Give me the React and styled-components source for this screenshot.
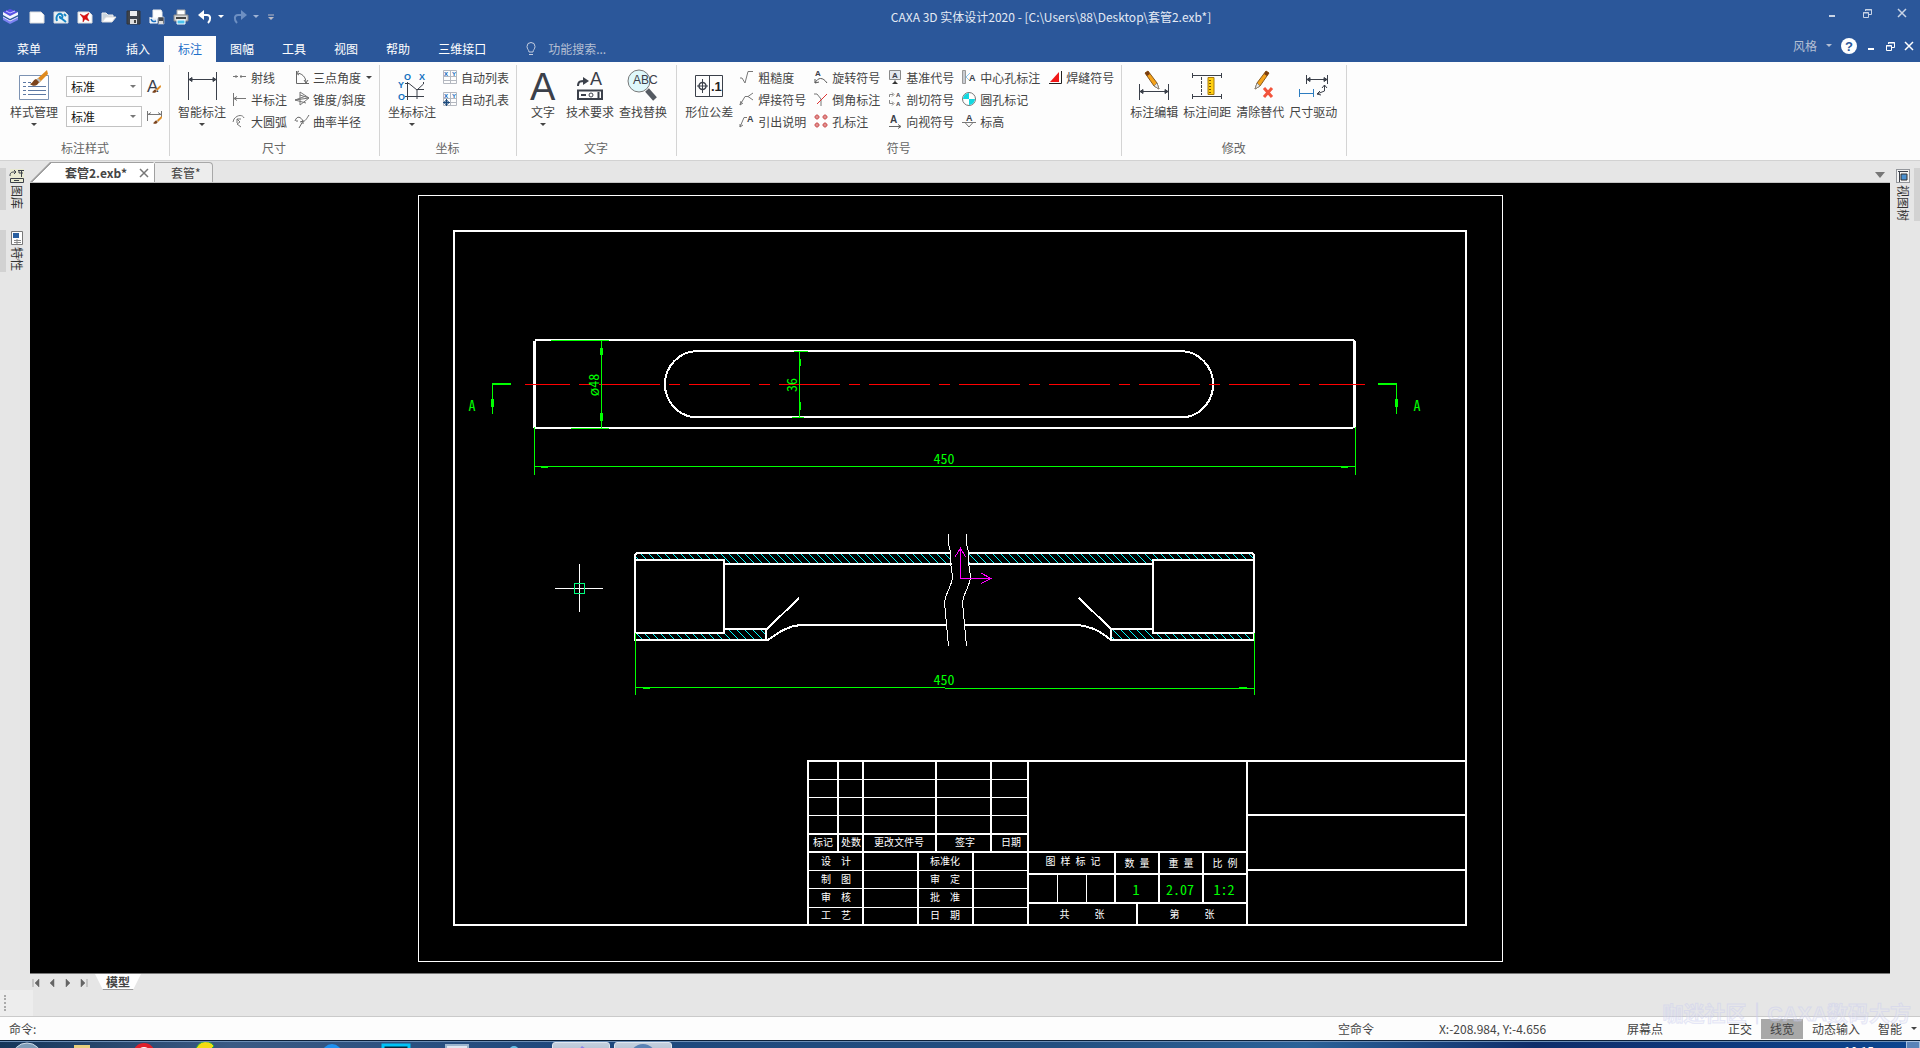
import React from "react";
import styled, { createGlobalStyle } from "styled-components";

const GlobalStyle = createGlobalStyle`
    * {
        box-sizing: border-box;
    }
    body {
        margin: 0;
        font-family: "Noto Sans CJK SC", sans-serif;
        font-size: 12px;
        color: #444;
        background: #e6e6e6;
    }
    button, input, select {
        font: inherit;
        color: inherit;
        border: 0;
        padding: 0;
        margin: 0;
        background: none;
    }
`;

/* ---------- icons ---------- */

const IconSvg = styled.svg`
    flex: none;
    overflow: visible;
`;

const Icon = ({ size = 16, children }) => (
  <IconSvg width={size} height={size} viewBox={`0 0 ${size} ${size}`} fill="none" stroke="#3b404a" aria-hidden="true">
    {children}
  </IconSvg>
);

const Letter = ({ x, y, size = 9, weight = 700, fill = "#3b404a", children }) => (
  <text x={x} y={y} fontSize={size} fontWeight={weight} fontFamily="Liberation Sans, sans-serif" fill={fill} stroke="none">
    {children}
  </text>
);

const Pencil = ({ flip }) => (
  <g transform={flip ? "translate(32 0) scale(-1 1)" : undefined}>
    <path d="M7 4 L10 2 L19 14 L21 20 L16 17 Z" fill="#f5a31a" stroke="#8a5a1c" />
    <path d="M7 4 L10 2 L12 5 L9 7 Z" fill="#7a3d10" stroke="none" />
    <path d="M16 17 L19 14 L21 20 Z" fill="#e8e8e8" stroke="#777" strokeWidth="0.700" />
  </g>
);

const Brush = ({ x = 0, y = 0, s = 1 }) => (
  <g transform={`translate(${x} ${y}) scale(${s})`} stroke="none">
    <path d="M17 0 L18 4 L9 13 L6 10 Z" fill="#e08a1e" />
    <path d="M8 8 L11 11 L9 13 L6 10 Z" fill="#bbb" />
    <path d="M6 9 C3 10 3 13 0 14 C3 17 8 16 9 12 Z" fill="#7b431c" />
  </g>
);

const icons = {
  page: <path d="M1 3 H12 L15 6 V14 H1 Z" fill="#fff" stroke="#ddd" />,
  template: (
    <>
      <path d="M1 3 H12 L15 6 V14 H1 Z" fill="#e9f3f8" stroke="#ddd" />
      <path d="M4 12 C2 6 7 3 9 6 C11 9 6 11 7 7 M8 9 L13 13 M11 5 L13 7" stroke="#1583c4" strokeWidth="2" />
    </>
  ),
  sheetRed: (
    <>
      <path d="M1 3 H12 L15 6 V14 H1 Z" fill="#fff" stroke="#ddd" />
      <path d="M3 5 L7 7 L12 4 L10 8 L12 12 L8 10 L6 13 L6 9 Z" fill="#e01010" stroke="#b00" strokeWidth="0.500" />
    </>
  ),
  folder: (
    <>
      <path d="M1 13 V4 H5 L7 6 H12 V8" fill="#c9d4de" stroke="#eee" />
      <path d="M1 13 L5 8 H15 L11 13 Z" fill="#fff" stroke="#ddd" />
    </>
  ),
  save: (
    <>
      <path d="M2 2 H15 V15 H2 Z" fill="#3f444c" stroke="#30343a" />
      <path d="M5 2 H12 V7 H5 Z" fill="#eee" stroke="none" />
      <path d="M5 10 H12 V15 H5 Z" fill="#ddd" stroke="none" />
      <path d="M9 11 H11 V14 H9 Z" fill="#444" stroke="none" />
    </>
  ),
  saveAs: (
    <>
      <path d="M4 1 H12 L13 3 V9 H4 Z" fill="#fff" stroke="#eee" />
      <path d="M1 8 V14 H8 V9 H1" fill="#dfe9f4" stroke="#fff" />
      <path d="M2 10 C3 13 5 13 7 12" stroke="#1c6fc0" strokeWidth="1.500" />
      <path d="M9 8 H15 V15 H9 Z" fill="#444a54" stroke="#fff" strokeWidth="0.500" />
      <path d="M10 12 H14 V15 H10 Z" fill="#ddd" stroke="none" />
    </>
  ),
  print: (
    <>
      <path d="M4 1 H12 V6 H4 Z" fill="#fff" stroke="#aaa" />
      <path d="M1 6 H15 V12 H1 Z" fill="#d8d8d8" stroke="#888" />
      <path d="M3 8 H13 V10 H3 Z" fill="#444" stroke="none" />
      <path d="M4 11 H12 V15 H4 Z" fill="#4cc3ef" stroke="#fff" />
    </>
  ),
  undo: (
    <>
      <path d="M7 1 V11 L1 6 Z" fill="#fff" stroke="none" />
      <path d="M5 6 H10 C14 6 14 11 11 14" stroke="#fff" strokeWidth="2" />
    </>
  ),
  redo: (
    <>
      <path d="M9 1 V11 L15 6 Z" fill="#6d8fc2" stroke="none" />
      <path d="M11 6 H6 C2 6 2 11 5 14" stroke="#6d8fc2" strokeWidth="2" />
    </>
  ),
  ray: <path d="M1 7.500 H6 M8 7.500 H14 M4 6 V9 M9 6 V9" stroke="#777" />,
  halfDim: <path d="M1.500 2 V15 M2 7.500 H14 M2 7.500 L5 5.500 M2 7.500 L5 9.500" stroke="#777" />,
  bigArc: <path d="M2 6 C6 1 11 2 12 5 M2 6 L1 9 M5 6 L8 9 L5 11 L9 14 M5 6 L9 6 M5 6 V10" stroke="#777" />,
  angle: <path d="M2.500 2 V14.500 H15 M2 4 C8 4 12 8 12 14 M2 4 L5 2 M2 4 L5 6 M12 14 L10 11 M12 14 L14 11" stroke="#666" />,
  taper: <path d="M6 1 L15 7 L6 14 M6 1 V14 M6 4 L15 7 L1 9 M1 9 L12 12 M1 9 L12 5" stroke="#777" />,
  curvature: <path d="M1 8 C3 2 7 4 9 8 C11 9 13 5 15 2 M9 8 L5 15 M9 8 L6 9 M9 8 L9 11 M2 8 L4 8" stroke="#666" />,
  table: (
    <>
      <path d="M1.500 1.500 H14.500 V14.500 H1.500 Z M1.500 7.500 H14.500 M1.500 11.500 H14.500 M8.500 1.500 V14.500" stroke="#b4b8c0" />
      <Letter x={2} y={7} size={6} fill="#0a62b8">X</Letter>
      <Letter x={10} y={7} size={6} fill="#0a62b8">Y</Letter>
    </>
  ),
  holeTable: (
    <>
      <path d="M1.500 1.500 H14.500 V14.500 H1.500 Z M1.500 7.500 H14.500 M1.500 11.500 H14.500 M8.500 1.500 V14.500" stroke="#b4b8c0" />
      <Letter x={2} y={7} size={6} fill="#0a62b8">X</Letter>
      <Letter x={10} y={7} size={6} fill="#0a62b8">Y</Letter>
      <circle cx="4.500" cy="11.500" r="2" stroke="#1c4a7c" />
      <path d="M4.500 8 V15 M1 11.500 H8" stroke="#1c4a7c" />
    </>
  ),
  rough: <path d="M1 9 L3 9 L6 14 L9 2.500 H14" stroke="#777" />,
  weld: <path d="M1 14 L6 5.500 H9 M14 2 L9 5.500 L14 9 M1 14 L2 10 M1 14 L4 12" stroke="#777" />,
  leader: (
    <>
      <path d="M1 14 L5 4.500 H8 M1 14 L1 11 M1 14 L4 12" stroke="#777" />
      <Letter x={8} y={9} size={9}>A</Letter>
    </>
  ),
  rotate: (
    <>
      <Letter x={2} y={7} size={8}>A</Letter>
      <path d="M2 14 C5 8 10 8 14 14 M2 14 L2 10 M2 14 L6 13" stroke="#555" />
    </>
  ),
  chamfer: (
    <>
      <path d="M1 3 L4 3 L8 8 V15" stroke="#777" />
      <path d="M4 13 L14 3" stroke="#d33" />
    </>
  ),
  holes: (
    <g stroke="#d46a6a">
      {[[4, 4], [12, 4], [4, 12], [12, 12]].map(([x, y]) => (
        <path key={`${x}-${y}`} d={`M${x - 3} ${y} H${x + 3} M${x} ${y - 3} V${y + 3} M${x - 1.5} ${y - 1.5} H${x + 1.5} V${y + 1.5} H${x - 1.5} Z`} />
      ))}
    </g>
  ),
  datum: (
    <>
      <path d="M2.500 1.500 H13.500 V10.500 H2.500 Z M8 10.500 V14" stroke="#888" fill="#e4e8ee" />
      <path d="M5 15 L8 12 L11 15 Z" fill="#333" stroke="none" />
      <Letter x={5} y={9} size={8}>A</Letter>
    </>
  ),
  section: (
    <>
      <path d="M6 3.500 H2.500 V6 M2.500 9 V12.500 H6 M5 1.500 L7 3.500 L5 5.500 M5 10.500 L7 12.500 L5 14.500" stroke="#888" />
      <Letter x={9} y={6} size={6}>A</Letter>
      <Letter x={9} y={15} size={6}>A</Letter>
    </>
  ),
  viewDir: (
    <>
      <Letter x={3} y={10} size={10}>A</Letter>
      <path d="M2 13.500 H14 M11 11.500 L14 13.500 L11 15.500" stroke="#666" />
    </>
  ),
  centerHole: (
    <>
      <path d="M1.500 1.500 H4.500 V14.500 H1.500 Z" fill="#c8ccd2" stroke="#999" />
      <path d="M9 4 L5 8 L9 12" stroke="#8cc6ee" />
      <Letter x={8} y={12} size={9}>A</Letter>
    </>
  ),
  roundHole: (
    <>
      <circle cx="8" cy="8" r="6.500" fill="#fff" stroke="#777" />
      <path d="M8 8 V2 A6 6 0 0 0 2 8 Z M8 8 V14 A6 6 0 0 0 14 8 Z" fill="#13d8e0" stroke="none" />
    </>
  ),
  level: (
    <>
      <Letter x={5} y={8} size={9}>A</Letter>
      <path d="M1 9.500 H15 M4 9.500 L8 14 L12 9.500" stroke="#777" />
    </>
  ),
  seam: (
    <>
      <path d="M3 13 L12 3 V13 Z" fill="#f01818" stroke="none" />
      <path d="M2 14.500 H14.500 V2" stroke="#222" />
    </>
  ),
  fontBrush: (
    <>
      <Letter x={1} y={13} size={17} weight={400}>A</Letter>
      <Brush x={6} y={6} s={0.5} />
    </>
  ),
  dimBrush: (
    <>
      <path d="M1.500 2 V12 M15.500 2 V8 M2 5.500 H15 M2 5.500 L5 3.500 M15 5.500 L12 3.500" stroke="#777" />
      <Brush x={7} y={7} s={0.5} />
    </>
  ),
  styleMgr: (
    <>
      <path d="M1.500 6.500 H30.500 V30.500 H1.500 Z" fill="#fff" stroke="#7d93b3" />
      <path d="M5 13.500 H8 M5 17.500 H8 M5 21.500 H8 M5 25.500 H8 M10 13.500 H13 M10 17.500 H28 M10 21.500 H28 M10 25.500 H28" stroke="#5c78a3" />
      <Brush x={12} y={1} s={1} />
    </>
  ),
  smartDim: <path d="M2.500 3 V31 M30.500 3 V31 M3 10.500 H30 M3 10.500 L6 8.500 V12.500 Z M30 10.500 L27 8.500 V12.500 Z" fill="#3b404a" />,
  coord: (
    <>
      <Letter x={8} y={11} size={9} fill="#1170c0">O</Letter>
      <Letter x={23} y={11} size={9} fill="#1170c0">X</Letter>
      <Letter x={2} y={19} size={9} fill="#1170c0">Y</Letter>
      <Letter x={2} y={31} size={9} fill="#1170c0">O</Letter>
      <path d="M11.500 13 V31 M9 27.500 H28 M9 14.500 H13 L21 21 V30 M27.500 13 V15 L21 21 M21 20.500 H28" />
    </>
  ),
  bigA: <Letter x={3} y={31} size={38} weight={400}>A</Letter>,
  techReq: (
    <>
      <Letter x={16} y={16} size={18} weight={400}>A</Letter>
      <path d="M4 17 C4 12 7 12 10 12" strokeWidth="2" />
      <path d="M9 8 L15 12 L9 16 Z" fill="#3b404a" stroke="none" />
      <path d="M4 21.500 H28 V30 H4 Z" strokeWidth="2" />
      <path d="M7 26 H12 M24.500 23 V29" strokeWidth="2" />
      <circle cx="17" cy="26" r="2" />
    </>
  ),
  find: (
    <>
      <circle cx="12" cy="12" r="11" fill="#dff8fb" stroke="#777" />
      <path d="M20 21 L28 30" stroke="#555a62" strokeWidth="5" />
      <Letter x={6} y={15} size={12} weight={400}>ABC</Letter>
    </>
  ),
  gdt: (
    <>
      <path d="M2.500 6.500 H29.500 V27.500 H2.500 Z M16.500 6.500 V27.500" />
      <circle cx="9.500" cy="17" r="3.500" strokeWidth="1.500" />
      <path d="M9.500 10 V24 M4 17 H15" />
      <Letter x={18} y={22} size={13} fill="#222">.1</Letter>
    </>
  ),
  dimEdit: (
    <>
      <path d="M1.500 15 V31 M30.500 15 V31 M2 22.500 H30 M2 22.500 L5 20.500 V24.500 Z M30 22.500 L27 20.500 V24.500 Z" fill="#3b404a" />
      <Pencil />
    </>
  ),
  dimGap: (
    <>
      <path d="M1 6.500 H31 M1.500 4 V9 M30.500 4 V9 M1 27.500 H31 M1.500 25 V30 M30.500 25 V30" />
      <path d="M10.500 8 V26" strokeDasharray="3 1" />
      <path d="M17 8.500 H23 V25.500 H17 Z" fill="#ffcf10" stroke="#a87808" />
      <path d="M18 11.500 H20 M18 14.500 H20 M18 17.500 H20 M18 20.500 H20 M18 23.500 H20" stroke="#7a5600" />
    </>
  ),
  clear: (
    <>
      <Pencil flip />
      <path d="M20 19 L28 28 M28 19 L20 28" stroke="#f2543c" strokeWidth="3" />
    </>
  ),
  drive: (
    <>
      <path d="M9.500 6 V15 M30.500 6 V15 M10 10.500 H30 M10 10.500 L13 8.500 V12.500 Z M30 10.500 L27 8.500 V12.500 Z" fill="#3b404a" />
      <path d="M2.500 20 V28 M16.500 20 V28 M3 24.500 H16" stroke="#2c7cc0" />
      <path d="M27.500 16 V22 L20 25 M25 19 L27.500 16 L30 19 M23 22 L20 25 L24 26" />
    </>
  ),
  library: (
    <>
      <path d="M1 1 H15 V15 H1 Z" fill="#e9ead2" stroke="none" />
      <path d="M1 8 C1 4 3 4 6 4 M5 2 L7 4 L5 6 M9 2.500 H15 M12.500 3 V9 M10 3 V5 H14" />
      <path d="M1.500 10.500 H14.500 V14.500 H1.500 Z M5 12.500 H10" />
    </>
  ),
  props: (
    <>
      <path d="M2.500 1.500 H13.500 V14.500 H2.500 Z" fill="#fff" stroke="#777" />
      <path d="M4 3 H10 V8 H4 Z" fill="#2a5fa0" stroke="none" />
      <path d="M5 10.500 H12 M5 12.500 H12 M8 9 V14" stroke="#888" />
    </>
  ),
  tree: (
    <>
      <path d="M1.500 1.500 H14.500 V14.500 H1.500 Z" fill="#f3f3f3" strokeDasharray="1 1" />
      <path d="M3 3.500 H13 M4.500 4 V14" />
      <path d="M6 6 H12 V12 H6 Z" fill="#4a90d0" stroke="#333" />
    </>
  ),
};

/* ---------- title bar and menu ---------- */

const Page = styled.div`
    display: flex;
    flex-direction: column;
    height: 100vh;
    position: relative;
    overflow: hidden;
`;

const Header = styled.header`
    background: #2b579a;
    color: #fff;
`;

const TitleBar = styled.div`
    display: grid;
    grid-template-columns: auto 1fr auto;
    height: 28px;
    padding: 0 13px 0 2px;
    svg {
        display: block;
    }
`;

const QuickAccess = styled.div`
    display: flex;
    align-items: center;
    gap: 8px;
    padding-bottom: 1px;
`;

const ToolButton = styled.button`
    display: flex;
    align-items: center;
    gap: 5px;
`;

const Caret = styled.span`
    display: inline-block;
    border: 3px solid transparent;
    border-top-color: ${(p) => p.$color || "#444"};
    border-bottom: 0;
`;

const Title = styled.div`
    color: #e4eaf4;
    line-height: 34px;
    text-align: center;
    white-space: pre;
`;

const WindowButtons = styled.div`
    display: flex;
    align-items: center;
    gap: 9px;
    color: #fff;
`;

const FrameButtons = styled(WindowButtons)`
    gap: 25px;
    padding-bottom: 8px;
    color: #c9d4e6;
`;

const MenuBar = styled.nav`
    display: flex;
    align-items: flex-end;
    height: 34px;
    padding-right: 6px;
`;

const MenuTab = styled.button`
    height: 26px;
    padding: 0 14px 1px;
    color: #fff;
    ${(p) => p.$file && "padding: 0 19px 1px 17px;"}
    ${(p) => p.$active && "background: #fdfdfd; color: #1f6fc9;"}
`;

const Search = styled.label`
    display: flex;
    align-items: center;
    flex: 1;
    height: 26px;
    padding: 0 0 1px 26px;
    gap: 12px;
    input {
        width: 120px;
        outline: 0;
    }
    input::placeholder {
        color: #b4bfd3;
        opacity: 1;
    }
`;

const MenuRight = styled.div`
    display: flex;
    align-items: center;
    gap: 9px;
    height: 32px;
    padding-bottom: 1px;
    color: #b4bfd3;
    svg {
        display: block;
        overflow: visible;
    }
`;

/* ---------- ribbon ---------- */

const Ribbon = styled.section`
    display: flex;
    padding: 3px 0 4px;
    background: #fdfdfd;
    border-bottom: 1px solid #d2d2d2;
`;

const Group = styled.div`
    display: flex;
    flex-direction: column;
    height: 91px;
    padding: 1px 7px 0 6px;
    border-right: 1px solid #d4d4d4;
    &:first-child {
        padding-left: 8px;
    }
`;

const GroupBody = styled.div`
    display: flex;
    gap: 1px;
    height: 74px;
`;

const GroupName = styled.div`
    line-height: 16px;
    text-align: center;
    color: #666;
`;

const BigButton = styled.button`
    display: flex;
    flex-direction: column;
    align-items: center;
    min-width: ${(p) => (p.$narrow ? "40px" : "52px")};
    padding: 3px 2px 0;
    line-height: 16px;
    white-space: nowrap;
    span {
        margin: 3px 0;
    }
    ${Caret} {
        margin: 0;
    }
`;

const Columns = styled.div`
    display: flex;
    gap: 7px;
    margin-left: 3px;
`;

const Column = styled.div`
    display: flex;
    flex-direction: column;
`;

const SmallButton = styled.button`
    display: flex;
    align-items: center;
    gap: 3px;
    height: 22px;
    white-space: nowrap;
    ${Caret} {
        margin-left: 2px;
    }
`;

const StyleRows = styled.div`
    display: flex;
    flex-direction: column;
    gap: 9px;
    padding: 10px 0 0 5px;
`;

const StyleRow = styled.div`
    display: flex;
    align-items: center;
    gap: 4px;
    height: 21px;
    svg {
        display: block;
    }
`;

const SelectBox = styled.label`
    display: flex;
    align-items: center;
    width: 76px;
    height: 21px;
    padding-right: 5px;
    background: #fff;
    border: 1px solid #c2c2c2;
    select {
        flex: 1;
        appearance: none;
        padding-left: 4px;
        color: #111;
        outline: 0;
    }
`;

/* ---------- work area ---------- */

const Main = styled.main`
    display: flex;
    flex: 1;
    min-height: 0;
`;

const SideBar = styled.aside`
    display: flex;
    flex-direction: column;
    gap: 20px;
    flex: 0 0 30px;
    padding-top: 7px;
`;

const SideTab = styled.button`
    display: flex;
    flex-direction: ${(p) => (p.$right ? "row-reverse" : "row")};
    align-items: stretch;
    justify-content: space-between;
    min-height: 42px;
    color: #333;
    &::before {
        content: "";
        width: 6px;
        background: #d2d2d2;
    }
    > span {
        display: flex;
        flex-direction: column;
        align-items: center;
        gap: 1px;
        padding: ${(p) => (p.$right ? "0 0 0 5px" : "0 5px 0 0")};
    }
    em {
        font-style: normal;
        line-height: 16px;
        writing-mode: vertical-rl;
        text-orientation: sideways;
    }
`;

const Center = styled.div`
    display: flex;
    flex: 1;
    flex-direction: column;
    min-width: 0;
`;

const DocTabs = styled.div`
    display: flex;
    align-items: flex-end;
    height: 22px;
    padding-right: 5px;
    border-bottom: 1px solid #c4c4c4;
`;

const DocTab = styled.button`
    height: 20px;
    padding: 0 11px 0 16px;
    line-height: 18px;
    background: #ededed;
    border: 1px solid #a8a8a8;
    border-left: 0;
    border-bottom: 0;
    border-radius: 0 4px 0 0;
`;

const ActiveTab = styled.div`
    display: flex;
    align-items: center;
    justify-content: space-between;
    width: 125px;
    height: 20px;
    padding: 0 5px 0 35px;
    font-weight: 700;
    clip-path: polygon(20px 0, 123px 0, 100% 2px, 100% 100%, 0 100%);
    background: linear-gradient(135deg, #a0a0a0 15px, #fff 15px);
    border-top: 1px solid #a0a0a0;
    border-right: 1px solid #a0a0a0;
    line-height: 18px;
    svg {
        display: block;
    }
`;

const TabArrow = styled.button`
    margin: 0 0 4px auto;
    line-height: 10px;
    ${Caret} {
        border-width: 6px 5px 0;
    }
`;

const Canvas = styled.div`
    flex: 1;
    min-height: 0;
    background: #000;
    svg {
        display: block;
        width: 100%;
        height: 100%;
    }
`;

const SheetBar = styled.div`
    display: flex;
    height: 17px;
    border-top: 1px solid #777;
    svg {
        display: block;
    }
`;

const SheetNav = styled.button`
    display: flex;
    align-items: center;
    width: 16px;
    height: 17px;
    padding-left: 1px;
`;

const SheetTab = styled.button`
    width: 46px;
    height: 16px;
    margin-left: 1px;
    font-weight: 700;
    line-height: 14px;
    background: #fff;
    border-bottom: 1px solid #999;
    clip-path: polygon(0 0, 100% 0, 38px 100%, 8px 100%);
`;

const DockRow = styled.div`
    height: 26px;
    div {
        width: 33px;
        height: 26px;
        padding: 5px 4px;
        background: #ededed;
    }
    i {
        display: block;
        height: 16px;
        border-left: 2px dotted #aaa;
    }
`;

const StatusBar = styled.footer`
    display: flex;
    align-items: center;
    height: 24px;
    padding: 0 3px 0 9px;
    background: #fdfdfd;
    border-top: 1px solid #cacaca;
    white-space: nowrap;
`;

const Command = styled.div`
    flex: 1;
`;

const StatusText = styled.div`
    width: ${(p) => p.$w};
`;

const StatusButton = styled.button`
    height: 20px;
    padding: 0 9px;
    background: ${(p) => (p.$on ? "#a8a8a8" : "none")};
`;

const Watermark = styled.div`
    position: absolute;
    right: 9px;
    bottom: 20px;
    font: 700 21px/28px "Liberation Sans", "Noto Sans CJK SC", sans-serif;
    color: rgba(230, 230, 240, 0.3);
    -webkit-text-stroke: 1px rgba(196, 200, 240, 0.4);
    pointer-events: none;
`;

const TaskBar = styled.div`
    display: flex;
    align-items: flex-start;
    height: 8px;
    overflow: hidden;
    border-top: 1px solid #0c2038;
    background: linear-gradient(90deg, #16365a, #3a5a84 12%, #1d477c 30%, #234f80 55%, #2b6298 68%, #0e2d6a 80%, #0c4590);
    box-shadow: inset 0 1px 0 #6b8db5;
    svg {
        display: block;
        margin: auto;
    }
    time {
        margin-left: auto;
        padding: 2px 32px 0 0;
        color: #fff;
        line-height: 16px;
    }
`;

const StartButton = styled.button`
    flex: none;
    width: 54px;
    height: 30px;
`;

const TaskButton = styled.button`
    width: ${(p) => (p.$open ? "58px" : "62px")};
    margin: ${(p) => (p.$open ? "1px 2px" : "1px 0")};
    height: 30px;
    flex: none;
    ${(p) => p.$open && "background: linear-gradient(#c4d0de, #8e9fb8); border: 1px solid #dfe7f0; border-radius: 3px;"}
`;

const ShowDesktop = styled.button`
    width: 14px;
    height: 30px;
    background: #5a83b8;
    border: 1px solid #a9c2e0;
`;

/* ---------- data ---------- */

const menus = ["常用", "插入", "标注", "图幅", "工具", "视图", "帮助", "三维接口"];

const quick = [
  ["新建", "page"], ["模板", "template"], ["图幅", "sheetRed"], ["打开", "folder"],
  ["保存", "save"], ["另存为", "saveAs"], ["打印", "print"],
];

const groups = [
  {
    name: "标注样式",
    big: [{ label: "样式管理", icon: "styleMgr", menu: true }],
    styles: ["fontBrush", "dimBrush"],
  },
  {
    name: "尺寸",
    big: [{ label: "智能标注", icon: "smartDim", menu: true }],
    columns: [
      [["射线", "ray"], ["半标注", "halfDim"], ["大圆弧", "bigArc"]],
      [["三点角度", "angle", true], ["锥度/斜度", "taper"], ["曲率半径", "curvature"]],
    ],
  },
  {
    name: "坐标",
    big: [{ label: "坐标标注", icon: "coord", menu: true }],
    columns: [[["自动列表", "table"], ["自动孔表", "holeTable"]]],
  },
  {
    name: "文字",
    big: [
      { label: "文字", icon: "bigA", menu: true, narrow: true },
      { label: "技术要求", icon: "techReq" },
      { label: "查找替换", icon: "find" },
    ],
  },
  {
    name: "符号",
    big: [{ label: "形位公差", icon: "gdt" }],
    columns: [
      [["粗糙度", "rough"], ["焊接符号", "weld"], ["引出说明", "leader"]],
      [["旋转符号", "rotate"], ["倒角标注", "chamfer"], ["孔标注", "holes"]],
      [["基准代号", "datum"], ["剖切符号", "section"], ["向视符号", "viewDir"]],
      [["中心孔标注", "centerHole"], ["圆孔标记", "roundHole"], ["标高", "level"]],
      [["焊缝符号", "seam"]],
    ],
  },
  {
    name: "修改",
    big: [
      { label: "标注编辑", icon: "dimEdit" },
      { label: "标注间距", icon: "dimGap" },
      { label: "清除替代", icon: "clear" },
      { label: "尺寸驱动", icon: "drive" },
    ],
  },
];

/* ---------- drawing ---------- */

const Thick = styled.path`
    fill: none;
    stroke: #fff;
    stroke-width: 2px;
`;

const Thin = styled.path`
    fill: none;
    stroke: ${(p) => p.$color || "#fff"};
    stroke-width: 1px;
`;

const Note = styled.text`
    font-family: "Noto Sans CJK SC", sans-serif;
    font-size: 10px;
    fill: #fff;
    text-anchor: middle;
`;

const Dim = styled.text`
    font-family: "Noto Sans Mono CJK SC", "Noto Sans CJK SC", sans-serif;
    font-size: 14px;
    fill: #00ff00;
    text-anchor: middle;
`;

const GREEN = "#00ff00";

const hatchLines = (y) => {
  let d = "";
  for (let x = 624; x < 1260; x += 8) d += `M${x} ${y} l12 12 `;
  return d;
};

const notes = [
  ["标记", 823, 846], ["处数", 851, 846], ["更改文件号", 899, 846], ["签字", 965, 846], ["日期", 1011, 846],
  ["设　计", 836, 865], ["制　图", 836, 883], ["审　核", 836, 901], ["工　艺", 836, 919],
  ["标准化", 945, 865], ["审　定", 945, 883], ["批　准", 945, 901], ["日　期", 945, 919],
  ["图\u2002样\u2002标\u2002记", 1073, 865], ["数\u2002量", 1137, 867], ["重\u2002量", 1181, 867], ["比\u2002例", 1225, 867],
  ["共　　\u2002张", 1082, 918], ["第　　\u2002张", 1192, 918],
];

const Drawing = () => (
  <svg viewBox="30 183 1860 790" shapeRendering="crispEdges" role="img" aria-label="套管2.exb">
    <defs>
      <clipPath id="wall">
        <path d="M636 553 H951 V564 H724 V560 H636 Z M969 553 H1254 V560 H1153 V564 H969 Z M636 633 H724 V629 H766 V640 H636 Z M1111 629 H1153 V633 H1254 V640 H1111 Z" />
      </clipPath>
    </defs>

    <Thin d="M418.500 195.500 H1502.500 V961.500 H418.500 Z" />
    <Thick d="M454 231 H1466 V925 H454 Z" />

    {/* top view */}
    <Thick d="M535 340 H1353 L1355 342 M1353 428 H535 L534 427" />
    <path d="M534.500 341 V427 M1354 341 V428" stroke="#fff" strokeWidth="3" />
    <Thick d="M697 351 H1182 A33 33 0 0 1 1213 384 A33 33 0 0 1 1187 417 H692 A33 33 0 0 1 665 384 A33 33 0 0 1 697 351 Z" />
    <Thin $color="#ff0000" d="M525 384.500 H1365" strokeDasharray="61 9 11 9" strokeDashoffset="16" />
    <Thin $color={GREEN} d="M551 340.500 H609 M571 428.500 H609 M601.500 341 V428 M794 351.500 H808 M792 417.500 H804 M799.500 351 V417" />
    <path d="M600 348 H603 V355 H600 Z M600 413 H603 V421 H600 Z M799 359 H801 V366 H799 Z M799 402 H801 V410 H799 Z" fill={GREEN} />
    <Thin $color={GREEN} d="M534.500 427 V475 M1355.500 427 V475 M534 466.500 H1355 M541 467.500 H548 M1341 467.500 H1348" />
    <path d="M492 384 H511 M1378 384 H1397" stroke={GREEN} strokeWidth="2" />
    <Thin $color={GREEN} d="M492.500 384 V414 M1396.500 384 V414" />
    <path d="M491 399 H494 V407 H491 Z M1395 399 H1398 V407 H1395 Z" fill={GREEN} />
    <Dim x="472" y="411">A</Dim>
    <Dim x="1417" y="411">A</Dim>
    <Dim x="944" y="464">450</Dim>
    <Dim transform="translate(599 385) rotate(-90)">ø48</Dim>
    <Dim transform="translate(797 385) rotate(-90)">36</Dim>

    {/* section A-A */}
    <g clipPath="url(#wall)">
      <Thin $color="#00ffff" shapeRendering="auto" d={hatchLines(553) + hatchLines(629)} />
    </g>
    <Thick d="M951 553 H637 L635 555 V640 H769 M635 560 H724 V633 H635 M724 564 H952 M724 629 H766 V640" />
    <Thick d="M969 553 H1252 L1254 555 V640 H1111 V629 H1153 M1254 560 H1153 V633 H1254 M969 564 H1153" />
    <Thick d="M767 629 L799 598 M768 640 C780 632 785 627 800 625 H946 M964 625 H1078 C1092 627 1100 631 1111 640 M1111 629 L1079 598" />
    <Thin d="M948.500 534 V544 L950.500 552 V562 L952.500 577 C952 586 945 594 944.500 603 L946.500 624 L948.500 646" />
    <Thin d="M966.500 534 V544 L968.500 552 V562 L970.500 577 C970 586 963 594 962.500 603 L964.500 624 L966.500 646" />
    <Thin $color="#ff00ff" d="M960.500 548 V578.500 H991 M955 557 L960.500 548 L965.500 557 M981 573 L991 578.500 L981 583.500" />
    <Thin $color={GREEN} d="M635.500 633 V695 M1254.500 633 V695 M635 687.500 H945 M945 688.500 H1254 M643 688.500 H650 M1239 687.500 H1247" />
    <Dim x="944" y="685">450</Dim>

    <Thin d="M555 588.500 H603 M579.500 564 V612" />
    <Thin $color="#00ff7f" d="M574.500 583.500 H584.500 V593.500 H574.500 Z" />

    {/* title block */}
    <Thick d="M808 925 V761 H1466 M838 761 V852 M863 761 V925 M936 761 V852 M991 761 V852 M1028 761 V925 M1247 761 V925" />
    <Thick d="M808 834 H1028 M808 852 H1247 M918 852 V925 M973 852 V925 M1028 874 H1247 M1028 903 H1247" />
    <Thick d="M1115 852 V903 M1159 852 V903 M1203 852 V903 M1137 903 V925 M1247 815 H1466 M1247 870 H1466" />
    <Thin d="M808 779.500 H1028 M808 797.500 H1028 M808 815.500 H1028 M808 870.500 H1028 M808 888.500 H1028 M808 907.500 H1028 M1057.500 874 V903 M1086.500 874 V903" />
    {notes.map(([text, x, y]) => (
      <Note key={text + x + y} x={x} y={y}>{text}</Note>
    ))}
    <Dim x="1136" y="895">1</Dim>
    <Dim x="1180" y="895">2.07</Dim>
    <Dim x="1224" y="895">1:2</Dim>
  </svg>
);

/* ---------- parts ---------- */

const WinIcon = ({ kind }) => (
  <svg width="10" height="10" viewBox="0 0 10 10" fill="none" stroke="currentColor" aria-hidden="true">
    {kind === "min" && <path d="M2 8 H8" strokeWidth="2" />}
    {kind === "max" && <path d="M3.500 3 V1.500 H9.500 V6.500 H7 M3 2 H10 M1.500 4.500 H6.500 V9.500 H1.500 Z M1 5 H7" />}
    {kind === "close" && <path d="M1 1 L9 9 M9 1 L1 9" strokeWidth="1.500" />}
  </svg>
);

const RibbonGroup = ({ group }) => (
  <Group>
    <GroupBody>
      {group.big.map((b) => (
        <BigButton key={b.label} $narrow={b.narrow}>
          <Icon size={32}>{icons[b.icon]}</Icon>
          <span>{b.label}</span>
          {b.menu && <Caret />}
        </BigButton>
      ))}
      {group.styles && (
        <StyleRows>
          {group.styles.map((s) => (
            <StyleRow key={s}>
              <SelectBox>
                <select aria-label={s === "fontBrush" ? "文字样式" : "尺寸样式"}>
                  <option>标准</option>
                </select>
                <Caret $color="#777" />
              </SelectBox>
              <button aria-label="样式刷"><Icon>{icons[s]}</Icon></button>
            </StyleRow>
          ))}
        </StyleRows>
      )}
      {group.columns && (
        <Columns>
          {group.columns.map((col) => (
            <Column key={col[0][0]}>
              {col.map(([label, icon, menu]) => (
                <SmallButton key={label}>
                  <Icon>{icons[icon]}</Icon>
                  {label}
                  {menu && <Caret />}
                </SmallButton>
              ))}
            </Column>
          ))}
        </Columns>
      )}
    </GroupBody>
    <GroupName>{group.name}</GroupName>
  </Group>
);

const taskIcons = [
  <path d="M8 3 H24 V20 H8 Z" fill="#e9cf7d" />,
  <circle cx="16" cy="12" r="9" fill="#fff" stroke="#e0202a" strokeWidth="4" />,
  <path d="M6 12 A10 10 0 0 1 24 4 L18 10 Z" fill="#f4dc10" stroke="#25b04a" />,
  null,
  <circle cx="18" cy="12" r="10" fill="#1e90f0" />,
  <path d="M7 3 H33 V20 H7 Z" fill="#06283c" stroke="#00c4f8" strokeWidth="3" />,
  <path d="M8 3 H30 V20 H8 Z" fill="#dfe8f2" stroke="#9db6cf" strokeWidth="2" />,
  <circle cx="14" cy="9" r="5" fill="#67bfe6" />,
];

function App() {
  return (
    <>
      <GlobalStyle />
      <Page>
        <Header>
          <TitleBar>
            <QuickAccess>
              <svg width="19" height="18" viewBox="0 0 19 18" aria-hidden="true">
                <path d="M1 4 L8 1 L16 4 L8 8 Z" fill="#5a50e8" />
                <path d="M1 4 L8 8 L16 4 V7 L8 11 L1 7 Z" fill="#f4f4ff" />
                <path d="M4 3 L8 5 L13 3" stroke="#c9c6ff" fill="none" />
                <path d="M1 9 L8 13 L16 9 V12 L8 16 L1 12 Z" fill="#7d82f2" />
                <path d="M1 9 L8 13 L16 9" stroke="#dfe0ff" fill="none" />
              </svg>
              {quick.map(([label, icon]) => (
                <ToolButton key={label} aria-label={label}><Icon>{icons[icon]}</Icon></ToolButton>
              ))}
              <ToolButton aria-label="撤销"><Icon>{icons.undo}</Icon><Caret $color="#fff" /></ToolButton>
              <ToolButton aria-label="重做"><Icon>{icons.redo}</Icon><Caret $color="#9fb3d4" /></ToolButton>
              <ToolButton aria-label="自定义">
                <svg width="8" height="10" viewBox="0 0 8 10" aria-hidden="true">
                  <path d="M1 3 H7" stroke="#b9b9c4" />
                  <path d="M1 5 H7 L4 8 Z" fill="#b9b9c4" />
                </svg>
              </ToolButton>
            </QuickAccess>
            <Title>{"CAXA 3D 实体设计2020 - [C:\\Users\\88\\Desktop\\套管2.exb*]"}</Title>
            <FrameButtons>
              {["min", "max", "close"].map((k) => (
                <ToolButton key={k} aria-label={k}><WinIcon kind={k} /></ToolButton>
              ))}
            </FrameButtons>
          </TitleBar>
          <MenuBar>
            <MenuTab $file>菜单</MenuTab>
            {menus.map((m) => (
              <MenuTab key={m} $active={m === "标注"}>{m}</MenuTab>
            ))}
            <Search>
              <svg width="10" height="14" viewBox="0 0 10 14" fill="none" stroke="#c3cde0" aria-hidden="true">
                <path d="M3 10 C3 8 1 7 1 4.500 A4 4 0 0 1 9 4.500 C9 7 7 8 7 10 Z M3 12.500 H7" />
              </svg>
              <input placeholder="功能搜索..." aria-label="功能搜索" />
            </Search>
            <MenuRight>
              <span>风格</span>
              <Caret $color="#b4bfd3" />
              <ToolButton aria-label="帮助">
                <svg width="16" height="16" viewBox="0 0 16 16" aria-hidden="true">
                  <circle cx="8" cy="8" r="8" fill="#fff" />
                  <text x="8" y="13" fontSize="13" fontWeight="700" fontFamily="Liberation Sans, sans-serif" textAnchor="middle" fill="#2b579a">?</text>
                </svg>
              </ToolButton>
              <WindowButtons>
                {["min", "max", "close"].map((k) => (
                  <ToolButton key={k} aria-label={`doc ${k}`}><WinIcon kind={k} /></ToolButton>
                ))}
              </WindowButtons>
            </MenuRight>
          </MenuBar>
        </Header>

        <Ribbon>
          {groups.map((g) => (
            <RibbonGroup key={g.name} group={g} />
          ))}
        </Ribbon>

        <Main>
          <SideBar>
            <SideTab><span><Icon>{icons.library}</Icon><em>图库</em></span></SideTab>
            <SideTab><span><Icon>{icons.props}</Icon><em>特性</em></span></SideTab>
          </SideBar>
          <Center>
            <DocTabs>
              <ActiveTab>
                套管2.exb*
                <button aria-label="关闭">
                  <svg width="10" height="10" viewBox="0 0 10 10" aria-hidden="true">
                    <path d="M1 1 L9 9 M9 1 L1 9" stroke="#777" strokeWidth="1.500" />
                  </svg>
                </button>
              </ActiveTab>
              <DocTab>套管*</DocTab>
              <TabArrow aria-label="文档列表"><Caret $color="#777" /></TabArrow>
            </DocTabs>
            <Canvas><Drawing /></Canvas>
            <SheetBar>
              {["M2 1 V9 M8 1 L4 5 L8 9 Z", "M7 1 L3 5 L7 9 Z", "M3 1 L7 5 L3 9 Z", "M8 1 V9 M2 1 L6 5 L2 9 Z"].map((d) => (
                <SheetNav key={d} aria-label="翻页">
                  <svg width="10" height="10" viewBox="0 0 10 10" aria-hidden="true">
                    <path d={d} fill="#666" stroke="#666" strokeWidth="0.500" />
                  </svg>
                </SheetNav>
              ))}
              <SheetTab>模型</SheetTab>
            </SheetBar>
          </Center>
          <SideBar>
            <SideTab $right><span><Icon>{icons.tree}</Icon><em>视图树</em></span></SideTab>
          </SideBar>
        </Main>

        <DockRow><div><i /></div></DockRow>
        <StatusBar>
          <Command>命令:</Command>
          <StatusText $w="101px">空命令</StatusText>
          <StatusText $w="188px">X:-208.984, Y:-4.656</StatusText>
          <StatusText $w="92px">屏幕点</StatusText>
          <StatusButton>正交</StatusButton>
          <StatusButton $on>线宽</StatusButton>
          <StatusButton>动态输入</StatusButton>
          <StatusButton>智能</StatusButton>
          <Caret />
        </StatusBar>
        <TaskBar>
          <StartButton aria-label="开始">
            <svg width="54" height="30" viewBox="0 0 54 30" aria-hidden="true">
              <circle cx="27" cy="17" r="15" fill="#7f9db8" stroke="#cfdce8" />
            </svg>
          </StartButton>
          {taskIcons.map((art, i) => (
            <TaskButton key={i} aria-label={`任务 ${i + 1}`}>
              <svg width="38" height="30" viewBox="0 0 38 30" aria-hidden="true">{art}</svg>
            </TaskButton>
          ))}
          <TaskButton $open aria-label="CAXA">
            <svg width="38" height="30" viewBox="0 0 38 30" aria-hidden="true"><path d="M12 12 L20 3 L28 9 L20 16 Z" fill="#8b84ea" /></svg>
          </TaskButton>
          <TaskButton $open aria-label="录屏">
            <svg width="38" height="30" viewBox="0 0 38 30" aria-hidden="true"><circle cx="19" cy="14" r="13" fill="#5b82b4" /></svg>
          </TaskButton>
          <time>10:15</time>
          <ShowDesktop aria-label="显示桌面" />
        </TaskBar>
        <Watermark>咖迷社区｜CAXA数码大方</Watermark>
      </Page>
    </>
  );
}

export default App;
